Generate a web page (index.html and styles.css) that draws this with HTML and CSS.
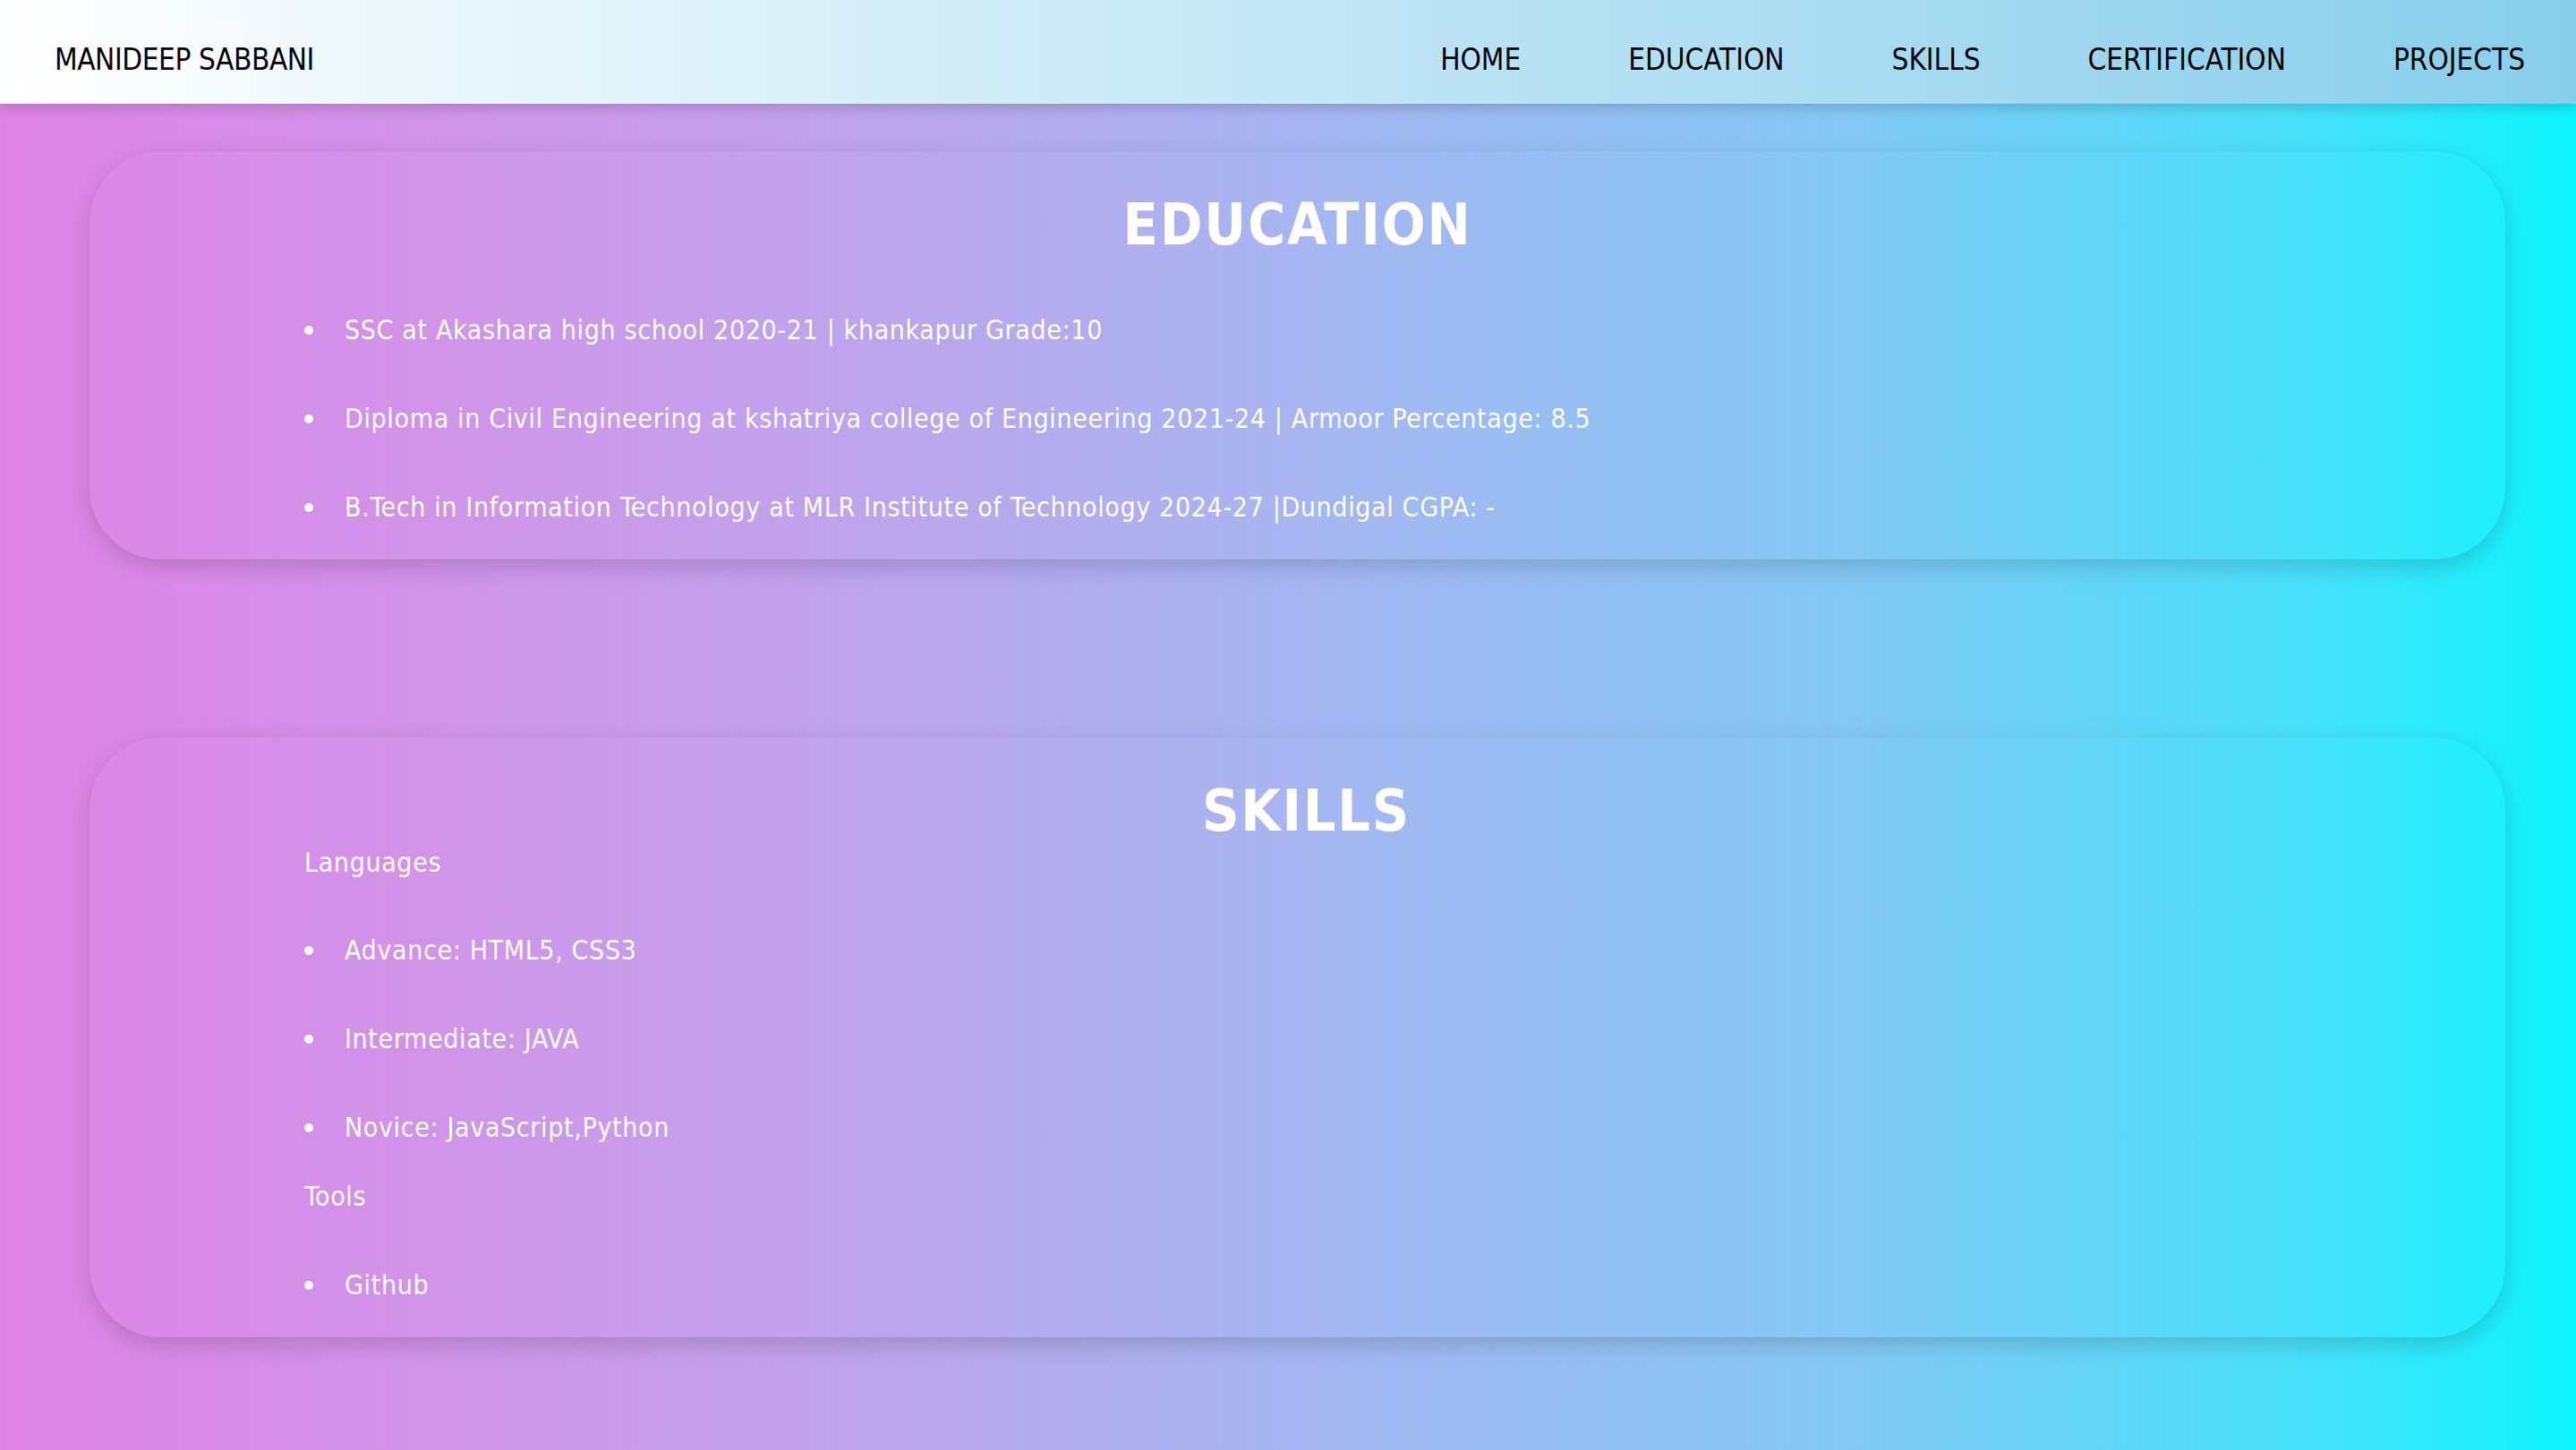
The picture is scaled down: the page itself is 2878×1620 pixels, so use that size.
FILE: index.html
```html
<!DOCTYPE html>
<html lang="en">
<head>
<meta charset="utf-8">
<title>Manideep Sabbani</title>
<link rel="stylesheet" href="styles.css">
</head>
<body>
<header class="topbar">
  <div class="brand">MANIDEEP SABBANI</div>
  <nav class="nav">
    <a class="nav-link" href="#home">HOME</a>
    <a class="nav-link" href="#education">EDUCATION</a>
    <a class="nav-link" href="#skills">SKILLS</a>
    <a class="nav-link" href="#certification">CERTIFICATION</a>
    <a class="nav-link" href="#projects">PROJECTS</a>
  </nav>
</header>

<main class="content">
  <section class="card card-edu" id="education">
    <h2 class="card-title">EDUCATION</h2>
    <ul class="list">
      <li class="item">SSC at Akashara high school 2020-21 | khankapur Grade:10</li>
      <li class="item">Diploma in Civil Engineering at kshatriya college of Engineering 2021-24 | Armoor Percentage: 8.5</li>
      <li class="item">B.Tech in Information Technology at MLR Institute of Technology 2024-27 |Dundigal CGPA: -</li>
    </ul>
  </section>

  <section class="card card-skills" id="skills">
    <h2 class="card-title card-title-skills">SKILLS</h2>
    <div class="group">
      <p class="group-label">Languages</p>
      <ul class="list list-lang">
        <li class="item">Advance: HTML5, CSS3</li>
        <li class="item">Intermediate: JAVA</li>
        <li class="item">Novice: JavaScript,Python</li>
      </ul>
      <p class="group-label group-label-tools">Tools</p>
      <ul class="list list-tools">
        <li class="item">Github</li>
      </ul>
    </div>
  </section>
</main>
</body>
</html>
```

FILE: styles.css
```css
html {
  margin: 0;
  min-height: 100%;
  background: linear-gradient(to right, #df84e6 0%, #c89cea 25%, #a7b5f1 50%, #84c9f4 72%, #45e2fb 90%, #0cf5fd 100%);
}

body {
  margin: 0;
  min-height: 1620px;
  font-family: "DejaVu Sans Condensed", "DejaVu Sans", sans-serif;
  font-stretch: condensed;
  color: #ffffff;
}

.topbar {
  display: flex;
  justify-content: space-between;
  align-items: flex-start;
  height: 116px;
  box-sizing: border-box;
  padding: 48px 57px 0 61px;
  background: linear-gradient(to right, #ffffff, #87ceeb);
  box-shadow: 0 4px 14px rgba(0, 0, 0, 0.18);
  position: relative;
  z-index: 1;
}

.brand {
  font-size: 33px;
  line-height: 38px;
  letter-spacing: -0.4px;
  color: #000000;
}

.nav {
  display: flex;
  gap: 120px;
}

.nav-link {
  font-size: 33px;
  line-height: 38px;
  color: #000000;
  text-decoration: none;
}

.content {
  padding: 53px 79px 120px 100px;
  display: flex;
  flex-direction: column;
  gap: 199px;
}

.card {
  border-radius: 80px;
  box-shadow: 0 8px 26px rgba(0, 0, 0, 0.17);
  padding: 44px 0 40px;
}

.card-title {
  margin: 0 0 62px;
  text-align: center;
  font-size: 64px;
  line-height: 76px;
  font-weight: bold;
  letter-spacing: 1.8px;
  color: #ffffff;
}

.card-title-skills {
  margin-bottom: 2px;
  padding-left: 20px;
}

.list {
  list-style: none;
  margin: 0;
  padding: 0 0 0 240px;
}

.group .list {
  padding-left: 0;
}

.group {
  padding-left: 240px;
}

.item {
  display: flex;
  align-items: center;
  font-size: 30px;
  line-height: 36px;
  letter-spacing: 0.65px;
  margin-bottom: 63px;
}

.item:last-child {
  margin-bottom: 0;
}

.item::before {
  content: "";
  flex: none;
  width: 10px;
  height: 10px;
  border-radius: 50%;
  background: #ffffff;
  margin-right: 35px;
}

.group-label {
  margin: 0 0 62px;
  font-size: 30px;
  line-height: 36px;
  letter-spacing: 0.65px;
}

.group-label-tools {
  margin-top: 41px;
  margin-bottom: 63px;
}
```
